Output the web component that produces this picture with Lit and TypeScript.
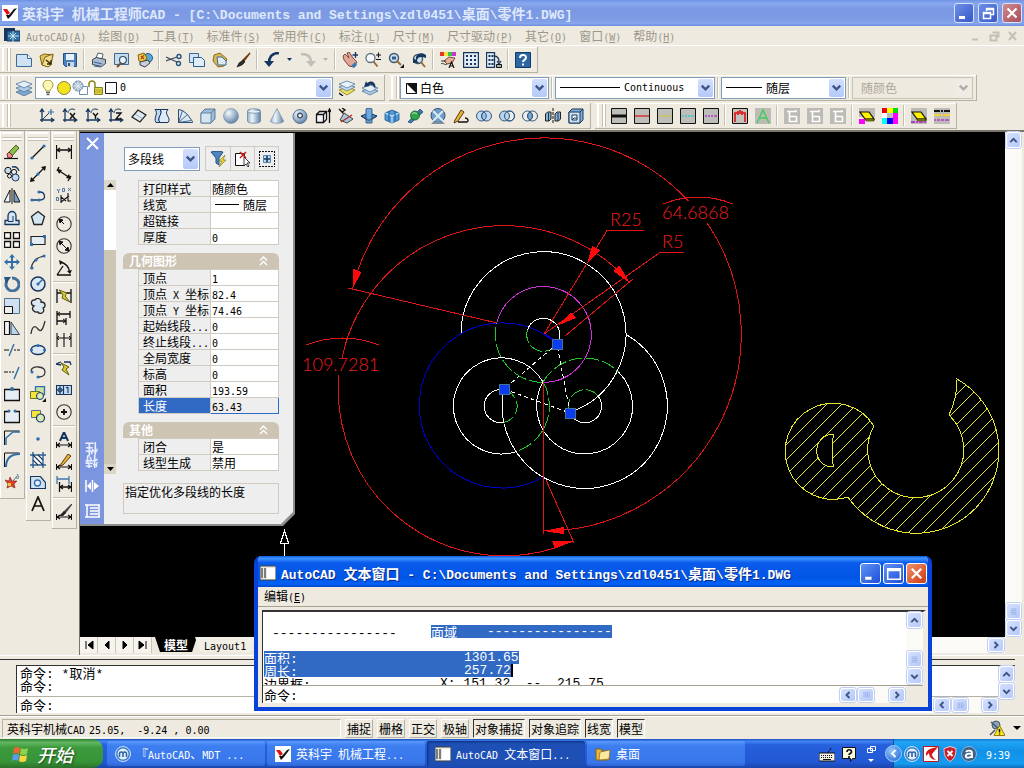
import { LitElement, html, svg, css, nothing } from "lit";
import { customElement } from "lit/decorators.js";

type Shape = [string, string?, string?, number?];

const N = "#17365f";
const L = "#c3daf0";
const K = "#111";
const Y = "#f5e33a";

/** Full circle as path data. */
const c = (x: number, y: number, r: number) =>
  `M${x - r} ${y}a${r} ${r} 0 1 0 ${2 * r} 0a${r} ${r} 0 1 0 ${-2 * r} 0z`;

const axes: Shape[] = [["M3 1v13M1 12h14M1 4l2-3 2 3M12 10l3 2-3 2", "none", N, 1.3]];
const swatch = (color: string, w: number, dash = false): Shape[] => [
  ["M.5.5h15v15H.5z", "#bdbdb9", K],
  dash ? ["M2 8h2M5 8h2M8 8h2M11 8h3", "none", color, w] : ["M1 8h14", "none", color, w],
];
const ghost: Shape[] = [
  ["M0 0h16v16H0z", "#bcbbb5"],
  ["M3 3.500h9V2M5.500 3.500v10h7v-5M5.500 8.500h7", "none", "#fff", 1.6],
];
const eraser: Shape[] = [["M1 4h9l5 7H6z", "#fff200", K, 1.2], ["M6 11h9v2H7z", "#9b9400", K, 0.6]];

const ICONS: Record<string, Shape[]> = {
  new: [["M.5 2.500h11l4 4v8H.5z", "#cfe3f4", "#3c6a94"], ["M11.500 2.500v4h4", "#fff", "#3c6a94"]],
  open: [["M1 4l4-2 9 1-1 4-6 7-4-1z", "#e3c458", "#7d651c"], ["M6 5l8-3-2 11-3 2-6-2z", "#f1dd8c", "#7d651c"], ["M7 8l5 4M12 8v4H8", "none", "#3a2c08", 1.4]],
  save: [["M1.500 1.500h13v13h-11l-2-2z", "#4a83bb", "#26517f"], ["M4 2h8v6H4z", "#e8f1f9"], ["M5 10h7v5H5z", "#cbd8e4"], ["M6 11h2v3H6z", "#26517f"]],
  print: [["M5 6l2-5 5 1-1 5z", "#fff", "#56606b"], ["M1.500 7.500l4-2 9 2v4l-4 3-9-2z", "#aebccc", "#34455a"], ["M3 10l8 2M3 14l7 1", "none", "#2e6aa3", 1.2]],
  preview: [["M.5 1.500h14v11H.5z", "#c4dbef", "#3c6a94"], [c(9, 8, 3.5), "#eaf4fb", "#39506a", 1.2], ["M7 11l-4 4", "none", "#7a4a20", 2]],
  publish: [[c(11, 6, 4.5), "#5aa9d8", "#235b85"], ["M1 3l6-2 3 5-4 5-4-2z", "#f1c93a", "#7d651c"], ["M3 10l8-2 2 3-5 4-5-2z", "#c9cfd8", "#3a3f49"], ["M4 4l3 3M7 3L4 7", "none", "#b5361e", 1.2]],
  cut: [["M0 5l11 5M0 9l11-4", "none", "#3d4c5e", 1.2], [c(13, 4.5, 2), "none", "#26517f", 1.4], [c(12.5, 11.5, 2), "none", "#26517f", 1.4]],
  copy: [["M.5 1.500h9v9h-9z", "#cfe3f4", "#3c6a94"], ["M4.500 5.500h8l3 3v6h-11z", "#e1eef8", "#2a5d8c"]],
  paste: [["M2 3l6-2 7 6-3 7-6 1-5-6z", "#d9b854", "#8a6c1f"], ["M5 5h5l4 4v4H6z", "#dceaf6", "#3c6a94"]],
  match: [["M15 1L8 8l1 1z", "#b97b4a", "#6e3c15", 1.3], ["M8 8l2 2-3 3-5 2 2-4z", "#2d2d2d", "#111", 0.6]],
  undo: [["M15 1C7 1 5 6 5 11", "none", N, 2.6], ["M0 9h10l-5 6z", N]],
  redo: [["M1 2c8 0 10 4 10 8", "none", "#c0c0ba", 2.4], ["M6 9h10l-5 6z", "#c0c0ba"]],
  pan: [["M1 4l2-2 4 4-2-5 2-1 4 6 4 4-3 5-5-1-5-6z", "#e3a596", "#7c4a40"], ["M13.500 0v6M10.500 3h6", "none", N, 1.3], ["M9 14l4-4 2 3-3 3z", "#3a79b0"]],
  zoomrt: [[c(5.5, 6, 4.5), "#f4f8fb", "#60707f", 1.3], ["M8.500 9.500l4 5", "none", "#9a6a35", 2], ["M11 3h5M13.500.5v5M11 7.500h5", "none", K, 1.1]],
  zoomwin: [[c(6, 6, 4.5), "#cfe0ee", "#42586e", 1.4], ["M4 4.500h4v3H4z", "#2c5f92"], ["M9 9l4 4", "none", "#9a6a35", 2], ["M16 12v4h-4z", K]],
  zoomprev: [[c(7, 7, 4.5), "#cfe0ee", "#42586e", 1.4], ["M10 10l4 5", "none", "#9a6a35", 2], ["M15 3C9-1 4 3 5 8L2 6v5h6L6 9c0-4 4-5 9-3z", N]],
  props: [["M0 0h4v4H0z", "#e3342b"], ["M4 0h4v4H4z", "#f4e53a"], ["M8 0h4v4H8z", "#39c24b"], ["M12 0h4v4h-4z", "#c536c9"], ["M4 9l5-4 6 1-3 5-5 1z", "#e7ae98", "#80503f"], ["M1 9h5M1 12c2-2 4 2 6 0", "none", "#333"], ["M9 16l2.500-6 2.500 6M10 14h3", "none", K, 1.2]],
  dc: [["M.5.5h15v15H.5z", "#e3edf7", N, 1.4], ["M3 3h2v2H3zm4 0h2v2H7zm4 0h2v2h-2zM3 7h2v2H3zm4 0h2v2H7zm4 0h2v2h-2zM3 11h2v2H3zm4 0h2v2H7zm4 0h2v2h-2z", N]],
  tool: [["M.5.5h8v15h-8z", "#e3edf7", N, 1.3], ["M2.500 3h2v2h-2zm0 4h2v2h-2zm0 4h2v2h-2zM5.500 3h2v2h-2zm0 4h2v2h-2zm0 4h2v2h-2z", N], ["M8 4c4 0 5 2 5 6M11 9l2 3 2-3", "none", N, 1.3], ["M10.500 12.500h5v3h-5z", "#9bb", K]],
  help: [["M.5.5h15v15H.5z", "#2a67a2", "#123a66"], ["M5 6c0-4 6-4 6-.5 0 2.500-3 2.500-3 4.500M8 11.500v2", "none", "#fff", 2]],
  layers: [["M8 9l8 3-8 4-8-4z", "#7fa8cc", "#3c6a94", 0.7], ["M8 5l8 3-8 4-8-4z", "#b3cde4", "#3c6a94", 0.7], ["M8 1l8 3-8 4-8-4z", "#e4eff8", "#3c6a94", 0.7]],
  bulb: [["M6 11c0-2-3-3-3-6a5 5 0 0 1 10 0c0 3-3 4-3 6z", "#fbf7b5", "#a39a39"], ["M6 12.500h4M6.500 14.500h3", "none", "#666", 1.3]],
  sun: [[c(8, 8, 6.5), "#f3e21d", "#8c8437"]],
  vp: [["M7.500 6.500h8v8h-8z", "#fff", "#6c8fb0"], [c(6, 6, 5), "#a9c0d3", "#6d8aa3"], ["M1 6h10M6 1v10M2.500 2.500l7 7M9.500 2.500l-7 7", "none", "#e8f0f6", 0.8]],
  lock: [["M1 7V4c0-4 6-4 6 0v4", "none", "#8f8b2b", 1.6], ["M6.500 7.500h8v7h-8z", "#e2d740", "#85802a"], ["M7 10h7M7 12h7", "none", "#aaa12e"]],
  square: [["M1.500 2.500h11v11h-11z", "#fff", K]],
  layobj: [["M8 7l8 3-8 5-8-5z", "#f0e25b", "#827a1d", 0.8], ["M8 4l8 3-8 4-8-4z", "#c9dcec", "#3c6a94", 0.7], ["M8 1l8 3-8 4-8-4z", "#eaf2f9", "#3c6a94", 0.7], ["M0 13l4 3", "none", K, 1.4]],
  layprev: [["M8 8l8 3-8 4-8-4z", "#b3cde4", "#3c6a94", 0.7], ["M8 5l8 3-8 4-8-4z", "#e4eff8", "#3c6a94", 0.7], ["M13 9c2-6-3-10-8-6L4 1 2 7l6-1-1-1c3-1 5 1 6 4z", N]],
  white: [["M2.500 3.500h10v10h-10z", "#fff", K], ["M2 3l11 11V3z", K]],

  ucs: [...axes, ["M3 12l7-7", "none", N], ["M12 1v6M9 4h6", "none", "#2f6cab", 1.2]],
  ucsx: [...axes, ["M8 5l5 6M13 5L8 11", "none", K, 1.4], ["M6 5c0-4 5-5 7-3", "none", N, 1]],
  ucsy: [...axes, ["M8 5l2.500 3L13 5M10.500 8v3", "none", K, 1.4], ["M6 5c0-4 5-5 7-3", "none", N, 1]],
  ucsz: [...axes, ["M8 5h5l-5 6h5", "none", K, 1.4], ["M6 5c0-4 5-5 7-3", "none", N, 1]],
  face: [["M1 9l6-7 8 5-6 7z", "#dfeaf3", "#222", 1.2], ["M4 6l8 5", "none", "#8296a8", 0.7]],
  mesh: [["M1 1.500h5c4 4-4 8 0 13H2c-3-5 3-9-1-13z", "#bfd8ee", N], ["M6 1.500h8c-5 5 4 8 0 13H6c-4-5 4-9 0-13z", "#dcebf7", N]],
  fan: [["M1.500 14.500v-13l4 1 5 4 5 7v1z", "#d8e8f5", "#2b4c70"], ["M1.500 14.500l4-12M1.500 14.500l9-8M1.500 14.500l13-2", "none", "#2b4c70", 0.8]],
  box: [["M1 5l4-4h10v10l-4 4H1z", "#9dbcd8", "#42678c", 0.8], ["M1 5h10v10H1z", "#d4e4f1", "#42678c", 0.7], ["M11 5l4-4", "none", "#42678c", 0.7]],
  ball: [[c(8, 8, 7.5), "url(#ball)", "#6d89a6", 0.6]],
  cyl: [["M1.500 3c0-3 13-3 13 0v10c0 3-13 3-13 0z", "url(#tube)", "#5c7c9c", 0.7], ["M1.500 3c0 3 13 3 13 0", "#e4eff8", "#5c7c9c", 0.7]],
  cone: [["M8 .5L1.500 13c0 3 13 3 13 0z", "url(#tube)", "#6d89a6", 0.7]],
  torus: [[c(8, 8.5, 7), "url(#ball)", "#43648a", 0.8], [c(8, 7.5, 2.4), "#eeeadf", "#223e5e", 1.2]],
  extrude: [["M1.500 6.500h7v8h-7zM1.500 6.500l3-3h7v8l-3 3M8.500 6.500l3-3", "#f2f5f8", K, 1.3], ["M14.500 15V2M13 4l1.500-3L16 4", "none", K, 1.3]],
  revolve: [["M1 1l6 6M4 0l3 2-3 2", "none", K, 1.4], ["M6 5l9 6-6 4-7-3z", "#a9c6e0", "#444"], ["M3 14L14 7", "none", "#b02a20", 1.3]],
  slice: [["M0 8l8-3 8 3-8 5z", "#4c90cf", N], ["M5 1c0-1 6-1 6 0v14H5z", "#6fa8db", N, 0.7], ["M0 8l8 4 8-4-8 5z", "#9cc7ec", N, 0.6]],
  section: [["M1 5l7-3 7 3v7l-7 3-7-3z", "#4e9ad9", "#23558a", 0.8], ["M1 5l7 3 7-3M8 8v7", "none", "#bfe0f8", 1.2], ["M5 3v10M11 3v10", "none", "#23558a"]],
  inter: [["M1 14L13 1l3 3L4 15z", "#3e76b8", "#1d3c66", 0.7], [c(8, 7.5, 4.5), "#2fa54a", "#135b25", 0.8], ["M5 6c2-2 4-1 5 0", "none", "#d8f7dd"]],
  xball: [[c(8, 7.5, 7), "#6f9fc9", "#2c4f75"], ["M3 3l10 10M13 3L3 13", "none", "#dbe9f5", 2], ["M3 14h10l2 2H1z", "#7d8fa0"]],
  pencil: [["M2 12l6-10 3 2-6 9-4 2z", "#e9b43c", "#5a3b0c"], ["M5 14h9c2-1 1-4-2-4", "none", K, 1.3]],
  union: [[c(5.5, 8, 5), L, "#2b567f"], [c(10.5, 8, 5), L, "#2b567f"], ["M8 4c3 2 3 6 0 8-3-2-3-6 0-8z", "#a3c4e3", "#2b567f"]],
  subtract: [[c(10.5, 8, 5), "#eee", "#2b567f"], [c(5.5, 8, 5), "#b9d3ea", "#2b567f"], [c(10.5, 8, 5), "none", "#2b567f"]],
  intersect: [[c(5.5, 8, 5), "#f0efe9", "#2b567f"], [c(10.5, 8, 5), "none", "#2b567f"], ["M8 4c3 2 3 6 0 8-3-2-3-6 0-8z", "#7aaad6", "#2b567f"]],
  mirror3: [["M.5 6l2-2H6v7l-2 2H.5zM10 6l2-2h3.500v7l-2 2H10z", "#86b2dc", K, 0.9], ["M3.500 5v8M13 5v8", "none", K, 0.8], ["M8 0v3M8 4v3M8 8v3M8 12v3", "none", K, 1]],
  shell: [["M1 4l3-3h11v11l-3 3H1z", "#7fb0da", N], ["M1 4h11v11H1z", "#cfe2f2", N], ["M4 7h5v5H4z", "#fff", N], ["M12 4l3-3M4 12l2-2h3", "none", N]],
  s1: swatch(K, 3), s2: swatch("#d23b3b", 1.6), s3: swatch("#cfc43a", 1.6, true), s4: swatch("#3fc7bd", 1.6, true), s5: swatch("#b03fc7", 1.6, true),
  fit: [["M.5.5h15v15H.5z", "#c3c2bd", K], ["M3 14V5h3M13 14V5h-3M6 3v4M8 2v4M10 3v4", "none", "#d11", 1.6]],
  green: [["M0 0h16v16H0z", "#bcbbb5"], ["M2 15L8 2l6 13M4.500 10h7", "none", "#3fce57", 1.4]],
  g1: ghost, g2: ghost, g3: ghost,
  er1: [["M0 0h16v9H0z", "#bcbbb5"], ...eraser, ["M0 11h6v5H0z", "#f0f"]],
  grid9: [["M0 0h5v5H0z", "#e00"], ["M5 0h6v5H5z", "#ff0"], ["M11 0h5v5h-5z", "#0d0"], ["M0 5h5v5H0z", "#fff"], ["M5 5h6v5H5z", "#bbb"], ["M11 5h5v5h-5z", "#f0f"], ["M0 10h5v6H0z", "#0ff"], ["M5 10h6v6H5z", "#00e"], ["M11 10h5v6h-5z", "#f0f"]],
  er2: [["M0 0h16v16H0z", "#bcbbb5"], ...eraser, ["M0 14h4m1 0h2m1 0h4m1 0h2", "none", "#b03fc7", 2]],
  dashes: [["M0 0h16v16H0z", "#bcbbb5"], ["M0 3h6m1 0h2m1 0h6", "none", K, 2], ["M0 7h6m1 0h2m1 0h6", "none", "#f3d33a", 2], ["M0 12h2m1 0h3m1 0h3m1 0h4", "none", "#b03fc7", 1.6]],

  erase: [["M4 9l8-8 3 3-7 8z", "#8cbf4a", "#4c5b22"], ["M3 10l2-2 4 4-2 2H4z", "#e88f93", "#6f2c2c"], ["M0 14.500h14", "none", K, 1.2]],
  dup: [[c(4, 4.5, 3.2), L, K], [c(10, 6, 2.6), "#eee", K], [c(11.5, 11.5, 3.5), L, N], [c(5.5, 10, 2), "#eee", K], ["M8 1c4-1 6 1 7 4", "none", N, 1.3]],
  mirror: [["M6 2v12H0z", "#eef3f7", K], ["M10 2v12h6z", "#7aa3ca", K], ["M8 0v16", "none", K]],
  offset: [["M1 14.500h14v-4h-3V6c0-6-8-6-8 0v4.500H1z", "#d5e5f2", N, 1.3], ["M4 11.500h5V6", "none", N]],
  array: [["M.5.5h6v6h-6zM9.500.5h6v6h-6zM.5 9.500h6v6h-6zM9.500 9.500h6v6h-6z", "#f5f5f2", K, 1.3]],
  move: [["M8 0l3 3.500H9V7h3.500V5L16 8l-3.500 3V9H9v3.500h2L8 16l-3-3.500h2V9H3.500v2L0 8l3.500-3v2H7V3.500H5z", "#326ea8"]],
  rotate: [["M8 2a6.500 6.500 0 1 1-5 3", "none", "#45709a", 3], ["M0 1h7L2 8z", "#29527d"]],
  scale: [["M.5.5h15v15H.5z", "#cfe1f1", "#54728f"], ["M.5 8.500h8v7h-8z", "#eee", K, 1]],
  stretch: [["M.5 1.500h5v13h-5z", "#f4f4f0", K, 1.2], ["M7 2l8.500 12.500H7z", "#bcd4ea", "#345"]],
  trim: [["M0 8h5M10 8h2m1 0h3", "none", K], ["M5 14l5-12", "none", "#2f6cab", 1.4]],
  extend: [["M0 8h4m1 0h2m1 0h2", "none", K], ["M10 15l5-12", "none", "#2f6cab", 1.4]],
  break1: [["M.5 3.500h15v11H.5z", "#e6eef5", K, 1.3], [c(8, 3, 2), "#326ea8"]],
  break2: [["M5 3.500H.5v11h15v-11H11", "#e6eef5", K, 1.3], [c(5, 3, 1.5), "#326ea8"], [c(11, 3, 1.5), "#326ea8"]],
  chamfer: [["M.5 15V1h15", "none", K], ["M2 15V8l7-6h7", "none", "#326ea8", 1.5]],
  fillet: [["M.5 15V1h15", "none", K], ["M2 15C2 7 6 2 16 2", "none", "#326ea8", 2]],
  explode: [["M1 6l4 1 1-4 2 4 5 0-3 3 1 4-4-2-4 2 1-4z", "#d8402a", "#7c1d10", 0.6], ["M9 7l4-5M13 0l2 3M12 4h3", "none", "#54728f"], ["M4 9h3v3H4z", "#f0c83a"]],
  line: [["M2 14L14 2", "none", K, 1.3], [c(2, 14, 1.6), "#2d6db3"], [c(14, 2, 1.6), "#2d6db3"]],
  xline: [["M1 15L15 1", "none", K, 1.3], ["M0 16l1-5 4 4zM16 0l-1 5-4-4z", K], [c(8, 8, 1.6), "#2d6db3"]],
  pline: [["M1 12h9c7 0 5-8 0-8", "none", N, 1.3], [c(2, 12, 1.6), "#2d6db3"], [c(9, 12, 1.6), "#2d6db3"], [c(9, 4, 1.6), "#2d6db3"]],
  polygon: [["M8 1.500l6.500 5-2.500 8H4L1.500 6.500z", "#d3e4f2", "#222", 1.3]],
  rect: [["M1 4.500h14v8H1z", "#e1ecf5", "#222", 1.2], ["M0 11h3v3H0zM13 3h3v3h-3z", "#2d6db3"]],
  arc: [["M1 15C2 8 6 3 15 2", "none", "#333", 1.2], [c(2, 14, 1.6), "#2d6db3"], [c(6, 6, 1.6), "#2d6db3"], [c(14, 2, 1.6), "#2d6db3"]],
  circle: [[c(8, 8, 7), "#dbe8f3", N, 1.5], ["M8 8l5-5", "none", "#2d6db3", 1.5], [c(8, 8, 1.6), "#2d6db3"]],
  cloud: [["M4 8C0 7 1 1 5 2c2-3 7-1 6 2 5 0 5 5 2 6 3 5-4 7-5 4-5 1-7-4-4-6z", "#dbe8f3", "#222", 1.3]],
  spline: [["M1 14C2 6 5 5 8 9s5 0 7-8", "none", "#333", 1.3]],
  ellipse: [["M1 8c0-6 14-6 14 0s-14 6-14 0z", "#dbe8f3", N, 1.4], [c(8, 3.5, 1.5), "#2d6db3"], [c(1.5, 8, 1.5), "#2d6db3"], [c(14.5, 8, 1.5), "#2d6db3"]],
  earc: [["M1 7c1-6 14-5 14 1 0 4-4 5-6 5", "none", "#333", 1.3], [c(2, 8, 1.5), "#2d6db3"], [c(8, 13, 1.5), "#2d6db3"]],
  insert: [["M5.500.5h9v8h-9z", "#c9e2a6", "#2d6db3", 1.3], ["M.5 5.500h9v7h-9z", Y, "#66762a"], [c(10, 10, 3.5), "#d9eab9", N], ["M16 12v4h-4z", K]],
  block: [["M1.500 2.500h9v7h-9z", Y, "#4f6f93"], [c(10.5, 10, 4), "#d9eab9", N, 1.2]],
  point: [[c(8, 9, 1.8), "#2d6db3"]],
  hatch: [["M2 3h12v10H2z", "#fff"], ["M3 0v16M13 0v16M0 3h16M0 13h16", "none", "#2d5d92", 1.4], ["M3 8l5 5M3 3l10 10M8 3l5 5", "none", N, 1.1]],
  region: [["M.5 2.500h10l5 6v6H.5z", "#cfe1f1", N, 1.2], [c(7.5, 9, 3), "#eef", "#2d6db3", 1.3]],
  text: [["M2 15L8 1l6 14M4.500 10h7", "none", K, 1.7]],
  dlin: [["M.5 1v14M15.500 1v14M1 6h14M4 4L1 6l3 2M12 4l3 2-3 2", "none", K, 1.3]],
  dali: [["M3 1l-2 4M15 10l-3 5M2 4l12 8", "none", K, 1.3], ["M1 3l5 1-3 4zM15 13l-5-1 3-4z", K]],
  dord: [["M5 7v8M5 14l8-6M5 9l5 4M12 5v8h3", "none", K, 1.1], ["M1 1l1.500 2L4 1M2.500 3v2M12 0l3 3M15 0l-3 3M6.500.5h2v3h-2zM.5 9.500h2v3h-2z", "none", "#3f6da0", 0.9]],
  drad: [[c(8, 8, 7.2), "none", "#333", 1.1], ["M8 8L4 4M3 3l4 1-3 3z", K, K]],
  ddia: [[c(8, 8, 7.2), "none", "#333", 1.1], ["M4 4l8 8M3 3l4 1-3 3zM13 13l-4-1 3-3z", K, K]],
  dang: [["M1 15h14M1 15l6-9M4 2c6 1 9 5 10 11", "none", K, 1.3], ["M3 0l4 2-3 3zM16 10l-2 4-3-3z", K]],
  qdim: [["M1 1v14M15 1v14M1 5h14", "none", K, 1.3], ["M3 2l8 3-2 3 5 6-8-4 1-3z", "#d8cf2e", "#5f5a10"]],
  dbase: [["M1 1v14M1 4h13M1 11h9M10 8v7M14 1v7", "none", K, 1.3], ["M4 2L1 4l3 2M7 9l3 2-3 2", "none", K]],
  dcont: [["M1 1v14M8 1v14M15 1v14M1 6h14", "none", K, 1.1], ["M3 4L1 6l2 2M13 4l2 2-2 2", "none", K]],
  qlead: [["M0 4l5-2M0 4l5 1M8 2h6l1 3", "none", N, 1.3], ["M5 3l8 4-3 2 3 6-7-5 2-3z", "#d8cf2e", "#5f5a10"]],
  tol: [["M.5 3.500h7v9h-7zM7.500 3.500h8v9h-8z", L, N, 1.1], [c(4, 8, 2), "none", N], ["M4 4v8M1 8h6M12 5v6M10 6l2-1", "none", N, 1.1]],
  cmark: [[c(8, 8, 7.2), "none", "#333", 1.1], ["M8 5v6M5 8h6", "none", K, 1.8]],
  dedit: [["M4 9l4-9 4 9M5.500 6h5", "none", N, 2], ["M.5 10v6M15.500 10v6M1 13h14M4 11l-3 2 3 2M12 11l3 2-3 2", "none", K, 1.1]],
  dtedit: [["M5 10l7-10 3 2-8 9-3 1z", "#e9b43c", "#5a3b0c"], ["M.5 10v6M15.500 10v6M1 13h14M4 11l-3 2 3 2M12 11l3 2-3 2", "none", K, 1.1]],
  dupd: [["M1 0v8M13 0v8M1 3h12", "none", "#3f78ad", 1.3], ["M3.500 6v10M15.500 6v10M4 11h11M7 9l-3 2 3 2M12 9l3 2-3 2", "none", K, 1.3]],
  dstyle: [["M16 0L8 8l1 1z", "#777", "#444", 1.3], ["M8 7l2 2-3 3-4 0z", "#222"], ["M.5 10v6M15.500 10v6M1 13h14M4 11l-3 2 3 2M12 11l3 2-3 2", "none", K, 1.1]],

  filter: [["M1 1c4-1 8-1 12 0L9 7v7l-3-2V7z", "#4f86bd", "#26517f"], ["M15 4l-6 6h3l-3 6 7-7h-3z", "#f2dc3a", "#8b7a12", 0.7]],
  pick: [["M.5 2.500h9v12h-9z", "#fff", K], ["M5 1l6 6M11 1L5 7", "none", "#c22", 1.6], ["M9 6v9l2-2 2 3 1-1-2-3h3z", "#fff", K, 0.8]],
  select: [["M0 .5h2m1 0h2m1 0h2m1 0h2m1 0h2m1 0h1M0 15.500h2m1 0h2m1 0h2m1 0h2m1 0h2m1 0h1M.5 0v2m0 1v2m0 1v2m0 1v2m0 1v2m0 1v1M15.500 0v2m0 1v2m0 1v2m0 1v2m0 1v2m0 1v1", "none", K], ["M4.500 4.500h7v7h-7z", L, "#5b82a8"], ["M8 5v6M5 8h6", "none", N, 1.6]],
  logo: [["M0 0h16v16H0z", "#fff"], ["M1 4h4l3 4-3 2z", "#e01010"], ["M15 3l-6 8-3 3-2-4 3 0 5-6z", K]],
  dwg: [["M0 0h11v13H0z", N], ["M3 3h13v10H3z", "#2f6f9f", N], ["M9 3v11M4 8h11M6 5l6 6M12 5l-6 6", "none", "#d3f0ff", 0.9]],
  txtwin: [["M0 1h16v14H0z", "#e9e9e4", "#444"], ["M7 3h8v11H7z", "#fff"], ["M1 4h2m1 0h2M1 6h2m1 0h2M1 8h2m1 0h2M1 10h2m1 0h2M1 12h2m1 0h2", "none", K]],
  folder: [["M1 3h5l1 2h7v9H1z", "#e8b93c", "#8a6518"], ["M5 6l10-2-1 9-10 1z", "#fbe9a0", "#8a6518", 0.7]],
  max: [[c(8, 8, 7.5), "#3d7fc4", "#cfe4fb"], [c(8, 8, 5.5), "#e3f0fb"], ["M4.500 11V7.500c0-2 3.500-2 3.500 0V11M8 7.500c0-2 3.500-2 3.500 0V11", "none", "#2c66a8", 1.6]],
  kbd: [["M0 7h16v8H0z", "#f4f1e4", K], ["M2 9.500h1m1 0h1m1 0h1m1 0h1m1 0h1m1 0h1M2 11.500h1m1 0h1m1 0h1m1 0h1m1 0h1m1 0h1", "none", K, 1], ["M4 13.500h8M9 7c0-3 3-2 3-5", "none", K]],
  ques: [["M1.500 1.500h13v11h-3l-2 3v-3h-8z", "#fffde0", K], ["M6 6c0-3 4.500-3 4.500 0 0 1.500-2.500 1.500-2.500 3M8 10v2", "none", K, 1.7]],
  redbox: [["M.5.5h15v15H.5z", "#fff", "#c01818"], ["M15 1C6 2 2 5 3 10l3-3c0 4 3 7 7 7-4-3-5-6-3-7L3 15z", "#d41818"]],
  shield: [["M8 .5l6 2c0 6-1 10-6 13-5-3-6-7-6-13z", "#c8202a", "#eacccc"], ["M5.500 5l5 5M10.500 5l-5 5", "none", "#fff", 1.8]],
  aball: [[c(8, 8, 7.5), "#3e6288", "#8fb3d6"], ["M5 6c1-2 6-2 6 1v5M11 8c-5-1-7 1-6 3 1 1 4 1 6-1", "none", "#fff", 1.8]],
  warn: [[c(7, 5, 4), "#8fa3b8", "#41566c"], ["M1 15l5-5M2 2l9 8", "none", "#41566c", 1.5], ["M10.500 5.500l5.500 10H5z", "#ffe81c", "#8b7d08"], ["M10.500 9v3.500m0 1v1", "none", K, 1.5]],
};

const draw = (name: string) => svg`${ICONS[name].map(
  ([d, fill, stroke, w]) => svg`<path d=${d} fill=${fill ?? "none"} stroke=${stroke ?? "none"} stroke-width=${w ?? 1}></path>`,
)}`;
const icon = (name: string) => html`<svg class="icon" viewBox="0 0 16 16" aria-hidden="true">
  <defs>
    <radialGradient id="ball" cx=".35" cy=".3" r=".8"><stop offset="0" stop-color="#f2f8fd"></stop><stop offset="1" stop-color="#54779f"></stop></radialGradient>
    <linearGradient id="tube"><stop offset="0" stop-color="#8fafcd"></stop><stop offset=".35" stop-color="#f0f6fb"></stop><stop offset="1" stop-color="#5d80a6"></stop></linearGradient>
  </defs>${draw(name)}</svg>`;

/** Half-width characters are set in the narrow monospace face, the rest in the CJK face. */
const t = (text: string) =>
  text.split(/([\x00-\x7f]+)/).map((part, i) => (i % 2 ? html`<span class="lat">${part}</span>` : part));

const TOOLS1 = "new open save | print preview publish | cut copy paste match | undo v redo w | pan zoomrt zoomwin zoomprev | props dc tool | help";
const TOOLS3 = "ucs ucsx ucsy ucsz face mesh fan box ball cyl cone torus extrude revolve slice section inter xball pencil union subtract intersect mirror3 shell";
const TOOLS4 = "s1 s2 s3 s4 s5 | fit green | g1 g2 g3 | er1 grid9 | er2 dashes";
const RAILS = [
  "erase dup mirror offset array move rotate scale stretch trim extend break1 break2 chamfer fillet explode",
  "line xline pline polygon rect arc circle cloud spline ellipse earc insert block point hatch region text",
  "dlin dali dord | drad ddia dang | qdim dbase dcont | qlead tol cmark | dedit dtedit dupd | dstyle",
];
const MENUS: [string, string][] = [
  ["AutoCAD", "A"], ["绘图", "D"], ["工具", "T"], ["标准件", "S"], ["常用件", "C"], ["标注", "L"],
  ["尺寸", "M"], ["尺寸驱动", "P"], ["其它", "O"], ["窗口", "W"], ["帮助", "H"],
];
const GEOMETRY: [string, string][] = [
  ["顶点", "1"], ["顶点 X 坐标", "82.4"], ["顶点 Y 坐标", "74.46"], ["起始线段...", "0"], ["终止线段...", "0"],
  ["全局宽度", "0"], ["标高", "0"], ["面积", "193.59"], ["长度", "63.43"],
];

const tools = (list: string) =>
  list.split(" ").map((n) => {
    if (n === "|") return html`<i class="sep"></i>`;
    if (n === "v" || n === "w")
      return html`<button class="drop" aria-label="more"><svg width="5" height="3" viewBox="0 0 5 3"><path d="M0 0h5L2.500 3z" fill=${n === "v" ? N : "#b5b2a6"}></path></svg></button>`;
    return html`<button class="tool" aria-label=${n}>${icon(n)}</button>`;
  });

const CHEVRON = { up: "M4 10l4-4 4 4", down: "M4 6l4 4 4-4", left: "M10 4L6 8l4 4", right: "M6 4l4 4-4 4" };
const chevron = (dir: keyof typeof CHEVRON) =>
  html`<svg viewBox="0 0 16 16" aria-hidden="true"><path d=${CHEVRON[dir]} fill="none" stroke="#3d5587" stroke-width="2.500"></path></svg>`;
const arrowButton = (dir: keyof typeof CHEVRON) => html`<button class="sb" aria-label=${dir}>${chevron(dir)}</button>`;
const thumb = (across = false) => html`<span class="sb thumb"><svg viewBox="0 0 16 16"><path d=${across ? "M3.500 3v10M6.500 3v10M9.500 3v10M12.500 3v10" : "M3 3.500h10M3 6.500h10M3 9.500h10M3 12.500h10"} stroke="#7f9be0" fill="none"></path></svg></span>`;

const combo = (cls: string, label: string, value: string, lead: unknown = nothing, off = false) => html`
  <label class="combo ${cls} ${off ? "off" : ""}">${lead}
    <select aria-label=${label} ?disabled=${off}><option>${value}</option></select>
    <span class="arrow">${chevron("down")}</span>
  </label>`;

const rows = (data: [string, unknown][], selected = -1) => html`<table class="grid"><tbody>${data.map(
  ([k, v], i) => html`<tr class=${i === selected ? "sel" : ""}><th scope="row">${t(k)}</th><td>${typeof v === "string" ? t(v) : v}</td></tr>`,
)}</tbody></table>`;

/** Clockwise arc of radius r between two points. */
const arc = (x1: number, y1: number, r: number, large: number, x2: number, y2: number) =>
  `M${x1} ${y1}A${r} ${r} 0 ${large} 1 ${x2} ${y2}`;

const SHAPE =
  "M957 379A82.500 82.500 0 1 1 848 497A48 48 0 1 1 874 426A48 48 0 1 0 949 415A82 82 0 0 0 957 379z" +
  "M834 434L832 442V460L834 467C811 468 811 434 834 434z";

@customElement("app-root")
export class AppRoot extends LitElement {
  static styles = css`
    :host { display: flex; flex-direction: column; height: 100vh; position: relative; overflow: hidden; background: #eeeadf; color: #000;
      font: 12px/16px "Noto Sans CJK SC", sans-serif; }
    * { box-sizing: border-box; }
    button, select, input { font: inherit; color: inherit; border: 0; padding: 0; margin: 0; background: none; border-radius: 0; outline: 0; }
    i { font-style: normal; }
    svg { display: block; }
    .lat { font-family: "DejaVu Sans Mono", monospace; font-size: 10px; line-height: 10px; white-space: pre; }
    .icon { width: 16px; height: 16px; flex: none; }

    .title { height: 26px; flex: none; display: flex; align-items: center; gap: 4px; padding: 0 2px; color: #dfe8fb; font-size: 14px; font-weight: 700; white-space: nowrap;
      background: linear-gradient(#6f92e4, #87a8ef 12%, #7b99e2 35%, #7d9ce5 75%, #86a6ee 90%, #6d8cdc); }
    .title .lat, .wintitle .lat { font-family: "Liberation Mono", monospace; font-size: 13px; }
    .caption { flex: 1; }
    .wbtn { width: 20px; height: 20px; border: 1px solid #d8e3fa; border-radius: 3px; background: linear-gradient(135deg, #6d90e8, #3658c8); flex: none; }
    .wbtn.x { background: linear-gradient(135deg, #d08a90, #a84d58); }

    .menu { height: 20px; flex: none; display: flex; align-items: center; gap: 12px; padding: 0 4px; color: #9b978a; border-bottom: 1px solid #fff; }
    .menu .icon { margin-right: -6px; }
    .menu .mdi { margin-left: auto; width: 48px; height: 12px; }
    .menu button { white-space: nowrap; }

    .bar { height: 28px; flex: none; display: flex; align-items: center; gap: 4px; }
    .strip { height: 26px; display: flex; align-items: center; border: solid #b5b1a3; border-width: 0 1px 1px 0; box-shadow: inset 0 1px #fff; padding-right: 3px; }
    .grip { align-self: stretch; width: 8px; margin: 1px 2px 1px 2px; border: solid #fff; border-width: 0 2px; box-shadow: inset -1px 0 #c5c1b2, 1px 0 #c5c1b2; flex: none; }
    .tool { width: 23px; height: 22px; display: flex; align-items: center; justify-content: center; flex: none; }
    .drop { width: 13px; height: 22px; display: flex; align-items: center; justify-content: center; }
    .sep { width: 6px; flex: none; align-self: stretch; margin: 2px 0; background: linear-gradient(90deg, transparent 2px, #c5c1b2 2px 3px, #fff 3px 4px, transparent 4px); }
    .indent { width: 23px; flex: none; }
    .combo { height: 22px; display: flex; align-items: center; background: #fff; border: 1px solid #7f9db9; padding: 1px; min-width: 0; }
    .combo select { appearance: none; flex: 1; min-width: 0; height: 18px; line-height: 18px; font-size: 12px; }
    .combo .arrow { width: 15px; height: 18px; flex: none; border-radius: 2px; background: linear-gradient(#d3e0fd, #b3c9fa); display: grid; place-items: center; pointer-events: none; }
    .arrow svg, .sb svg { width: 100%; height: auto; max-height: 100%; }
    .combo.off { background: #eeeadf; border-color: #c9c5b6; color: #aca899; }
    .combo.off select { opacity: 1; }
    .combo.off .arrow { background: #f2f0e8; filter: grayscale(1) opacity(0.4); }
    .layer { width: 298px; margin-right: 2px; padding-left: 4px; }
    .layer select, .ltype select { font: 10px/18px "DejaVu Sans Mono", monospace; }
    .color { width: 149px; padding-left: 3px; margin-left: -1px; }
    .ltype { width: 160px; padding-left: 4px; }
    .lweight { width: 125px; padding-left: 4px; }
    .pstyle { width: 121px; padding-left: 8px; }
    .dash { height: 1px; background: #000; flex: none; margin-right: 4px; }
    .d60 { width: 60px; } .d36 { width: 36px; } .d24 { width: 24px; }

    .work { flex: 1; min-height: 0; display: flex; }
    .rails { display: flex; align-items: flex-start; width: 79px; flex: none; gap: 1px; border-top: 1px solid #a5a192; }
    .rail { width: 25px; display: flex; flex-direction: column; align-items: center; border: solid #b5b1a3; border-width: 0 1px 1px 0; box-shadow: inset 1px 0 #fff; padding-bottom: 5px; }
    .rail .tool { width: 22px; height: 22px; }
    .rail .grip { width: auto; height: 8px; align-self: stretch; margin: 1px 2px; border-width: 2px 0; box-shadow: inset 0 -1px #c5c1b2, 0 1px #c5c1b2; }
    .rail .sep { width: auto; height: 6px; margin: 0 1px; background: linear-gradient(transparent 2px, #c5c1b2 2px 3px, #fff 3px 4px, transparent 4px); }

    .view { flex: 1; min-width: 0; display: flex; flex-direction: column; border: solid #77746a; border-width: 2px 0 0 1px; padding-right: 2px; }
    .scene { flex: 1; min-height: 0; display: flex; }
    .canvas { flex: 1; min-width: 0; position: relative; background: #000; overflow: hidden; }
    .drawing { width: 100%; height: 100%; shape-rendering: crispEdges; fill: none; }
    .dim { font: 300 18px Lato, sans-serif; fill: #f01c1c; }
    .vbar { width: 17px; flex: none; background: #fbfaf7; display: flex; flex-direction: column; align-items: center; }
    .hbar { display: flex; align-items: center; background: #fbfaf7; }
    .sb { width: 15px; height: 16px; flex: none; border: 1px solid #fff; border-radius: 3px; background: linear-gradient(135deg, #d5e1fd, #b5c8f7); box-shadow: 0 0 0 1px #c0cff3; display: grid; place-items: center; margin: 0 1px 1px; }
    .sb.thumb svg { width: 9px; height: 9px; }
    .hbar .sb { height: 14px; width: 16px; margin: 0 1px; }
    .space { flex: 1; }
    .tabs { height: 16px; flex: none; display: flex; background: #eeeadf; }
    .tabs > .nav { width: 18px; border-right: 1px solid #c9c5b6; display: grid; place-items: center; background: #f6f4ec; }
    .tab { padding: 0 9px; height: 15px; line-height: 14px; clip-path: polygon(0 0, 100% 0, calc(100% - 5px) 100%, 5px 100%); }
    .tab.on { background: #000; color: #fff; font-weight: 700; margin-left: 3px; }
    .tab.sheet { background: #f2efe6; margin-left: -2px; }
    .tabs .hbar { flex: 1; }
    .corner { width: 17px; }
    .after { height: 2px; background: #eeeadf; }

    .palette { position: absolute; left: 0; top: 1px; width: 215px; height: 393px; background: #8d8d8d; padding: 0 2px 2px 0;
      clip-path: polygon(0 0, 100% 0, 100% calc(100% - 12px), calc(100% - 12px) 100%, 0 100%); }
    .sheet0 { height: 100%; background: #eeeeee; display: flex; clip-path: polygon(0 0, 100% 0, 100% calc(100% - 12px), calc(100% - 12px) 100%, 0 100%); }
    .spine { width: 24px; flex: none; background: #7c95df; color: #e8eeff; display: flex; flex-direction: column; align-items: center; justify-content: flex-end; gap: 12px; padding: 4px 0 6px; }
    .spine .close { margin-bottom: auto; }
    .spine .name { writing-mode: vertical-rl; transform: rotate(180deg); font-weight: 700; font-size: 13px; line-height: 16px; }
    .pscroll { width: 12px; flex: none; margin: 47px 0 50px; display: flex; flex-direction: column; background: #cdc6b4; }
    .pscroll button { height: 10px; background: #dcd6c6; display: grid; place-items: center; }
    .pscroll .free { height: 60px; background: #fff; }
    .pbody { flex: 1; min-width: 0; padding: 13px 14px 0 7px; }
    .prow { display: flex; gap: 5px; align-items: center; padding-left: 1px; margin-bottom: 9px; }
    .kind { width: 76px; height: 24px; padding-left: 3px; }
    .kind .arrow { height: 20px; }
    .pbtns { display: flex; border: 1px solid #d0cbbf; }
    .pbtns button { width: 24px; height: 23px; display: grid; place-items: center; }
    .pbtns button + button { border-left: 1px solid #d0cbbf; }
    .grid { width: calc(100% - 15px); margin-left: 15px; border-collapse: collapse; table-layout: fixed; }
    .grid tr { height: 16px; }
    .grid th, .grid td { padding: 0 0 0 4px; height: 16px; line-height: 14px; border: 1px solid #cfcbc0; font-weight: 400; text-align: left; overflow: hidden; white-space: nowrap; }
    .grid th { width: 72px; }
    .grid td { background: #fff; padding-left: 1px; }
    .grid .sel th { background: #316ac5; color: #fff; }
    .grid .sel td { background: #eee; border-color: #316ac5; }
    .grid .lw { display: flex; align-items: center; padding-left: 3px; }
    .ghead { display: flex; justify-content: space-between; align-items: center; width: 100%; height: 16px; margin-top: 8px; padding: 0 11px 0 6px; background: #cdc4b4; color: #fff; font-weight: 700; border-radius: 6px 6px 0 0; }
    .hint { margin-top: 12px; height: 31px; border: 1px solid #cfcbc0; padding-left: 1px; line-height: 15px; white-space: nowrap; }

    .cmd { height: 60px; flex: none; border-top: 1px solid #fff; padding: 3px 9px 0 0; }
    .cmdframe { height: 54px; border-top: 1px solid #333; padding: 5px 0 0 16px; display: flex; flex-direction: column; }
    .hist { height: 32px; display: flex; background: #fff; border: solid #333; border-width: 1px 0 0 1px; border-bottom: 1px solid #b5b1a3; }
    .lines { flex: 1; padding: 0 0 0 3px; font-size: 13px; line-height: 13px; }
    .lines .lat, .entry .lat { font-family: "Liberation Mono", monospace; font-size: 13px; line-height: 13px; }
    .lines div { height: 13px; }
    .entry { flex: 1; min-width: 0; display: flex; align-items: center; background: #fff; font-size: 13px; padding-left: 3px; border-left: 1px solid #333; }
    .entry label { white-space: nowrap; }
    .entry input { flex: 1; min-width: 0; height: 14px; }
    .line2 { display: flex; height: 16px; }
    .cmdh { width: 66px; margin-right: 16px; }

    .status { height: 24px; flex: none; display: flex; align-items: center; gap: 4px; border-top: 1px solid #a5a192; box-shadow: inset 0 1px #fff; padding: 2px 0 1px 2px; }
    .coords { width: 339px; height: 19px; border: 1px solid; border-color: #b5b1a3 #fff #fff #b5b1a3; padding-left: 4px; line-height: 18px; white-space: nowrap; display: flex; gap: 4px; align-items: baseline; }
    .mode { height: 19px; padding: 0 1px; line-height: 17px; border: 1px solid; border-color: #fff #b5b1a3 #b5b1a3 #fff; white-space: nowrap; }
    .mode.on { border-color: #333 #fff #fff #333; }
    .tray1 { margin-left: auto; display: flex; align-items: center; gap: 8px; padding: 1px 3px; }

    .task { height: 29px; flex: none; display: flex; color: #fff; background: linear-gradient(#1f4fc0, #3f86f2 8%, #2660dc 20%, #2358d4 80%, #1a46ac); }
    .start { width: 103px; border-radius: 0 10px 10px 0; background: linear-gradient(#2f7d2f, #62b662 12%, #3c9a3c 30%, #379337 80%, #2a702a); font: italic 500 18px/26px "Noto Sans CJK SC", sans-serif; text-shadow: 1px 1px 2px #1c4a1c; display: flex; align-items: center; gap: 6px; padding-left: 11px; margin-right: 3px; flex: none; }
    .start svg { width: 20px; height: 20px; }
    .app { width: 158px; margin: 2px 1px; padding-left: 8px; display: flex; align-items: center; gap: 5px; border-radius: 2px; background: linear-gradient(#5a98fb, #3c7ef0 20%, #3876ea 85%, #2e66d4); white-space: nowrap; }
    .app.on { background: #1d4fb4; box-shadow: inset 1px 1px 2px #0d2f7c; }
    .lang { margin-left: auto; display: flex; gap: 6px; align-items: center; padding-right: 10px; }
    .notify { width: 131px; flex: none; display: flex; align-items: center; gap: 2px; background: linear-gradient(#1578d0, #1fa5f5 10%, #1290e8 40%, #149bf0 85%, #0f6fc0); border-left: 1px solid #0a4f9c; margin-left: 4px; }
    .notify .icon { margin-right: 1px; }
    .more { width: 17px; height: 17px; border-radius: 50%; margin-left: -9px; background: radial-gradient(circle at 35% 30%, #8ec5fb, #1a63d4); border: 1px solid #9fd0ff; display: grid; place-items: center; }
    .clock { margin-left: 6px; }

    .win { position: absolute; left: 254px; top: 556px; width: 678px; height: 155px; background: #eeeadf; border: 4px solid #0842d8; border-top: 0; border-radius: 7px 7px 0 0; display: flex; flex-direction: column; overflow: hidden; }
    .wintitle { height: 31px; flex: none; margin: 0 -4px; padding: 3px 6px 0 6px; display: flex; align-items: center; gap: 3px; color: #fff; font-size: 14px; font-weight: 700; white-space: nowrap; text-shadow: 1px 1px #0a2a86;
      background: linear-gradient(#0a5ae0, #3d93ff 8%, #0a5bec 22%, #0055e5 70%, #0261f5 90%, #0148cc); }
    .wintitle .caption { padding-left: 2px; }
    .wintitle .wbtn { width: 21px; height: 21px; border-color: #fff; margin-right: -1px; background: linear-gradient(135deg, #5e92f5, #1f4fd6); }
    .wintitle .wbtn.x { background: linear-gradient(135deg, #f0906c, #cf3a12); }
    .winmenu { height: 20px; flex: none; padding: 1px 6px; border-bottom: 1px solid #a5a192; }
    .winbody { flex: 1; margin: 3px 2px 4px 4px; display: flex; flex-direction: column; min-height: 0; border: solid #333; border-width: 2px 0 0 1px; border-right: 3px solid #eeeadf; }
    .out { height: 74px; flex: none; display: flex; border-bottom: 1px solid #a5a192; background: #fff; }
    .log { flex: 1; min-width: 0; overflow: hidden; padding-left: 1px; font-size: 13px; line-height: 13px; }
    .log .lat { font-family: "Liberation Mono", monospace; font-size: 13px; line-height: 13px; }
    .log .r { height: 13px; display: flex; }
    .log mark { background: #316ac5; color: #fff; display: flex; }
    .key { width: 200px; flex: none; } .key.s { width: 176px; }
    .lead { width: 167px; padding-left: 8px; flex: none; }
    .mid { width: 56px; flex: none; }
    .caret { width: 2px; background: #000; }
    .winin { flex: 1; display: flex; min-height: 0; }
    .winin .hbar { width: 67px; flex: none; }
    .winin .corner { width: 17px; background: #eeeadf; flex: none; }
    .winin .entry { border-left: 0; padding-left: 1px; line-height: 15px; }
  `;

  private drawing() {
    const hatch = Array.from({ length: 40 }, (_, k) => 1171 + 15 * k);
    return html`<svg class="drawing" role="img" aria-label="drawing">
      <defs><clipPath id="part"><path clip-rule="evenodd" d=${SHAPE}></path></clipPath></defs>
      <g transform="translate(-80 -132)">
        <g stroke="#0000c8">
          <path d="M543 477A82.500 82.500 0 1 1 557 344"></path><path d="M544 333l13 9"></path>
        </g>
        <g stroke="#22c82a" stroke-dasharray="14 3">
          <path d=${arc(543, 382.5, 48, 0, 497, 322)}></path>
          <path d=${arc(557, 344, 16.5, 0, 527.5, 330)}></path>
          <path d=${arc(543, 382, 48, 0, 516.5, 451.5)}></path>
          <path d=${arc(504, 390, 16.5, 0, 503, 422.5)}></path>
          <path d=${arc(543, 382, 48, 0, 618.5, 372)}></path>
          <path d=${arc(570, 413, 16.5, 0, 598, 396)}></path>
        </g>
        <path stroke="#d030d8" d=${arc(497, 322, 48, 1, 543, 382.5)}></path>
        <g stroke="#fff">
          <path d=${arc(461, 333, 82.5, 1, 571, 412)}></path>
          <path d=${arc(627, 335, 82.5, 1, 504, 389)}></path>
          <path d=${arc(516.5, 451.5, 48, 1, 543, 382)}></path>
          <path d=${arc(618.5, 372, 48, 1, 543, 382)}></path>
          <path d=${arc(527.5, 330, 16.5, 1, 557, 344)}></path>
          <path d=${arc(503, 422.5, 16.5, 1, 504, 390)}></path>
          <path d=${arc(598, 396, 16.5, 1, 570, 413)}></path>
          <path stroke-dasharray="4 3" d="M557 344L504 389L570 413z"></path>
          <path d="M284.500 531l-4 12h8zM284.500 543v14"></path>
        </g>
        <g stroke="#e01414">
          <path d=${arc(352.5, 289, 197, 0, 688.5, 201)}></path>
          <path d=${arc(707, 223, 197, 0, 543.5, 531)}></path>
          <path d=${arc(342, 358, 166, 0, 630, 283)}></path>
          <path d="M339 375A166 166 0 0 0 573 541"></path>
          <path d="M348 288l149 35M543.500 382v152M546 480l28 63M565 336l68-57"></path>
          <path d="M644 230.500h-37L544 334M684 252.500h-24L544 334"></path>
          <path d="M306 345q37-14 73 0M663 204q35-14 70 0"></path>
        </g>
        <g fill="#ff0a0a">
          <path d="M352.500 289l1-20 8 3zM587 264l5-18 8 4zM559 325l12-13 5 6zM630 283l-17-12 6-6zM543.500 531l20-4v7zM573 541l-21 0 3 7z"></path>
        </g>
        <g class="dim"><text x="610" y="226">R25</text><text x="662" y="248">R5</text><text x="662" y="219">64.6868</text><text x="302" y="371">109.7281</text></g>
        <g fill="#0a3cf0" stroke="#4a6f9c"><path d="M552.500 339.500h10v10h-10zM499.500 384.500h10v10h-10zM565.500 408.500h10v10h-10z"></path></g>
        <g stroke="#e8e82a"><path d=${SHAPE}></path>
          <g clip-path="url(#part)">${hatch.map((s) => svg`<path d=${`M780 ${s - 780}L1010 ${s - 1010}`}></path>`)}</g></g>
      </g>
    </svg>`;
  }

  private palette() {
    const fold = html`<svg width="9" height="10" viewBox="0 0 9 10"><path d="M1 4.500L4.500 1 8 4.500M1 9l3.500-3.500L8 9" fill="none" stroke="#fff" stroke-width="1.400"></path></svg>`;
    return html`<aside class="palette"><div class="sheet0">
      <div class="spine">
        <button class="close" aria-label="close"><svg width="13" height="13" viewBox="0 0 13 13"><path d="M1 1l11 11M12 1L1 12" stroke="#fff" stroke-width="2"></path></svg></button>
        <span class="name">特性</span>
        <svg width="15" height="12" viewBox="0 0 15 12"><path d="M1 0v12M7.500 0v12" stroke="#fff" stroke-width="1.500"></path><path d="M6 2v8L2 6zM9 2v8l5-4z" fill="#fff"></path></svg>
        <svg width="15" height="14" viewBox="0 0 15 14"><path d="M0 1h15M0 13h15M2 1v12M5 4h8M5 7h8M5 10h8M14 1v12" fill="none" stroke="#fff" stroke-width="1.500"></path></svg>
      </div>
      <div class="pscroll">
        <button aria-label="up"><svg width="7" height="4" viewBox="0 0 7 4"><path d="M0 4l3.500-4L7 4z"></path></svg></button>
        <span class="free"></span><span class="space"></span>
        <button aria-label="down"><svg width="7" height="4" viewBox="0 0 7 4"><path d="M0 0l3.500 4L7 0z"></path></svg></button>
      </div>
      <div class="pbody">
        <div class="prow">${combo("kind", "对象", "多段线")}
          <div class="pbtns">${["filter", "pick", "select"].map((n) => html`<button aria-label=${n}>${icon(n)}</button>`)}</div></div>
        ${rows([["打印样式", "随颜色"], ["线宽", html`<span class="lw"><i class="dash d24"></i>随层</span>`], ["超链接", ""], ["厚度", "0"]])}
        <button class="ghead">几何图形${fold}</button>${rows(GEOMETRY, 8)}
        <button class="ghead">其他${fold}</button>${rows([["闭合", "是"], ["线型生成", "禁用"]])}
        <div class="hint">指定优化多段线的长度</div>
      </div>
    </div></aside>`;
  }

  private textWindow() {
    return html`<section class="win">
      <div class="wintitle">${icon("txtwin")}<span class="caption">${t("AutoCAD 文本窗口 - C:\\Documents and Settings\\zdl0451\\桌面\\零件1.DWG")}</span>${this.windowButtons(false)}</div>
      <div class="winmenu"><button>编辑<span class="lat">(<u>E</u>)</span></button></div>
      <div class="winbody">
        <div class="out"><div class="log">
          <div class="r"></div>
          <div class="r"><span class="lead">${t("----------------")}</span><mark><span class="mid">面域</span>${t("----------------")}</mark></div>
          <div class="r"></div>
          <div class="r"><mark><span class="key">${t("面积:")}</span>${t("1301.65")}</mark></div>
          <div class="r"><mark><span class="key">${t("周长:")}</span>${t("257.72")}</mark><i class="caret"></i></div>
          <div class="r"><span class="key s">${t("边界框:")}</span>${t("X: 151.32  --  215.75")}</div>
        </div><div class="vbar">${arrowButton("up")}<span class="space"></span>${thumb()}${arrowButton("down")}</div></div>
        <div class="winin"><div class="entry"><label for="c2">${t("命令:")}</label><input id="c2" /></div>
          <div class="hbar">${arrowButton("left")}${thumb(true)}<span class="space"></span>${arrowButton("right")}</div><span class="corner"></span></div>
      </div>
    </section>`;
  }

  private windowButtons(restore: boolean) {
    const mid = restore
      ? "M7.500 7V4.500h7v6H12M4.500 8.500h7v6h-7zM4.500 9.500h7M7.500 5.500h7"
      : "M3.500 4.500h12v10h-12zM4 6h11";
    return ["M4 13.500h6", mid, "M4.500 4.500l9 9M13.500 4.500l-9 9"].map(
      (d, i) => html`<button class="wbtn ${i === 2 ? "x" : ""}" aria-label=${["minimize", "restore", "close"][i]}>
        <svg viewBox="0 0 18 18"><path d=${d} fill="none" stroke="#fff" stroke-width=${[3, 1.5, 2.2][i]}></path></svg></button>`,
    );
  }

  render() {
    return html`
      <header class="title">${icon("logo")}<span class="caption">${t("英科宇 机械工程师CAD - [C:\\Documents and Settings\\zdl0451\\桌面\\零件1.DWG]")}</span>${this.windowButtons(true)}</header>
      <nav class="menu">${icon("dwg")}${MENUS.map(([m, k]) => html`<button>${t(m)}<span class="lat">(<u>${k}</u>)</span></button>`)}
        <svg class="mdi" viewBox="0 0 48 12"><path d="M0 9.500h6M20.500 2.500h6v5M18.500 5.500h6v5h-6zM37 2l7 8M44 2l-7 8" fill="none" stroke="#c4c0b2" stroke-width="2"></path></svg></nav>

      <div class="bar"><div class="strip"><i class="grip"></i>${tools(TOOLS1)}</div></div>
      <div class="bar">
        <div class="strip"><i class="grip"></i>${tools("layers")}
          ${combo("layer", "图层", "0", ["bulb", "sun", "vp", "lock", "square"].map(icon))}${tools("layobj layprev")}</div>
        <div class="strip"><i class="grip"></i>${combo("color", "颜色", "白色", icon("white"))}<i class="sep"></i>
          ${combo("ltype", "线型", "Continuous", html`<i class="dash d60"></i>`)}<i class="sep"></i>
          ${combo("lweight", "线宽", "随层", html`<i class="dash d36"></i>`)}<i class="sep"></i>
          ${combo("pstyle", "打印样式", "随颜色", nothing, true)}</div>
      </div>
      <div class="bar">
        <div class="strip"><i class="grip"></i><i class="indent"></i>${tools(TOOLS3)}</div>
        <div class="strip"><i class="grip"></i>${tools(TOOLS4)}</div>
      </div>

      <main class="work">
        <div class="rails">${RAILS.map((r) => html`<div class="rail"><i class="grip"></i>${tools(r)}</div>`)}</div>
        <div class="view">
          <div class="scene"><div class="canvas">${this.drawing()}${this.palette()}</div>
            <div class="vbar">${arrowButton("up")}<span class="space"></span>${thumb()}${arrowButton("down")}</div></div>
          <div class="tabs">${["M2 1v8M9 1v8L4 5z", "M7 1v8L3 5z", "M3 1v8l4-4z", "M8 1v8M1 1v8l5-4z"].map(
            (d) => html`<button class="nav" aria-label="tab"><svg width="10" height="10" viewBox="0 0 10 10"><path d=${d} fill="#000" stroke="#000"></path></svg></button>`,
          )}
            <button class="tab on">模型</button><button class="tab sheet">${t("Layout1")}</button>
            <div class="hbar"><span class="space"></span>${arrowButton("right")}</div><span class="corner"></span></div>
          <div class="after"></div>
        </div>
      </main>

      <section class="cmd"><div class="cmdframe">
        <div class="hist"><div class="lines"><div>${t("命令: *取消*")}</div><div>${t("命令:")}</div></div>
          <div class="vbar">${arrowButton("up")}${arrowButton("down")}</div></div>
        <div class="line2"><div class="entry"><label for="c1">${t("命令:")}</label><input id="c1" /></div>
          <div class="hbar cmdh">${arrowButton("left")}${thumb(true)}<span class="space"></span>${arrowButton("right")}</div></div>
      </div></section>

      <footer class="status"><div class="coords"><span>${t("英科宇机械CAD")}</span>${t("25.05,  -9.24 , 0.00")}</div>
        ${["捕捉", "栅格", "正交", "极轴", "对象捕捉", "对象追踪", "线宽", "模型"].map((m, i) => html`<button class="mode ${i > 3 ? "on" : ""}">${m}</button>`)}
        <span class="tray1">${icon("warn")}<svg width="8" height="4" viewBox="0 0 8 4"><path d="M0 0h8L4 4z"></path></svg></span></footer>

      <div class="task">
        <button class="start"><svg viewBox="0 0 20 20"><path d="M3 4q3-2 6 0L8 10q-3-2-6 0z" fill="#f0652f"></path><path d="M10 4q3 2 7 0l-1 6q-4 2-7 0z" fill="#8fd14a"></path><path d="M2 11q3-2 6 0l-1 6q-3-2-6 0z" fill="#5b9bf0"></path><path d="M9 11q3 2 7 0l-1 6q-4 2-7 0z" fill="#fbd63d"></path></svg>开始</button>
        ${([["max", "『AutoCAD、MDT ..."], ["logo", "英科宇 机械工程..."], ["txtwin", "AutoCAD 文本窗口..."], ["folder", "桌面"]] as const).map(
          ([n, s], i) => html`<button class="app ${i === 2 ? "on" : ""}">${icon(n)}<span>${t(s)}</span></button>`,
        )}
        <span class="lang">${icon("kbd")}${icon("ques")}<svg width="16" height="18" viewBox="0 0 16 18"><path d="M7.500 1.500h5v4h-5zM4.500 3.500h5v4h-5z" fill="#2660dc" stroke="#fff"></path><path d="M5 14h6l-3 3z" fill="#fff"></path></svg></span>
        <div class="notify"><button class="more" aria-label="more"><svg width="7" height="9" viewBox="0 0 7 9"><path d="M5.500 1L2 4.500 5.500 8" fill="none" stroke="#fff" stroke-width="2"></path></svg></button>
          ${["max", "redbox", "shield", "aball"].map(icon)}<span class="clock">${t("9:39")}</span></div>
      </div>
      ${this.textWindow()}`;
  }
}
